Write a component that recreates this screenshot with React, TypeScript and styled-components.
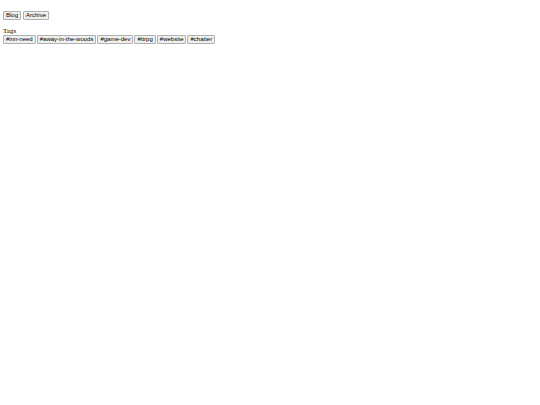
import React from 'react';
import styled, { createGlobalStyle } from 'styled-components';

const TAGS = [
  'inn-need',
  'away-in-the-woods',
  'game-dev',
  'ttrpg',
  'website',
  'chatter',
];

const App = () => {
  return (
    <>
      <GlobalStyle />
      <Page>
        <ButtonRow as="nav" $gap={2}>
          <Button type="button">Blog</Button>
          <Button type="button">Archive</Button>
        </ButtonRow>
        <section>
          <Title>Tags</Title>
          <ButtonRow $gap={1}>
            {TAGS.map((tag) => (
              <Button type="button" key={tag}>
                #{tag}
              </Button>
            ))}
          </ButtonRow>
        </section>
      </Page>
    </>
  );
};

const GlobalStyle = createGlobalStyle`
  body {
    margin: 0;
    background: #fff;
    color: #000;
    font-family: 'Liberation Serif', 'Times New Roman', serif;
    font-size: 7px;
    line-height: 8px;
  }
`;

const Page = styled.main`
  display: flex;
  flex-direction: column;
  row-gap: 7px;

  padding: 11px 3px 3px;
`;

const ButtonRow = styled.div<{ $gap: number }>`
  display: flex;
  flex-wrap: wrap;
  gap: ${({ $gap }) => $gap}px;
`;

const Title = styled.h2`
  margin: 0;
  font-size: 7px;
  font-weight: 400;
`;

const Button = styled.button`
  padding: 0 2px;
  border: 1px solid #b0b0b0;
  border-radius: 1px;
  background: #efefef;
  color: #000;
  font-family: 'Liberation Sans', Arial, sans-serif;
  font-size: 6px;
  line-height: 7px;
`;

export default App;
